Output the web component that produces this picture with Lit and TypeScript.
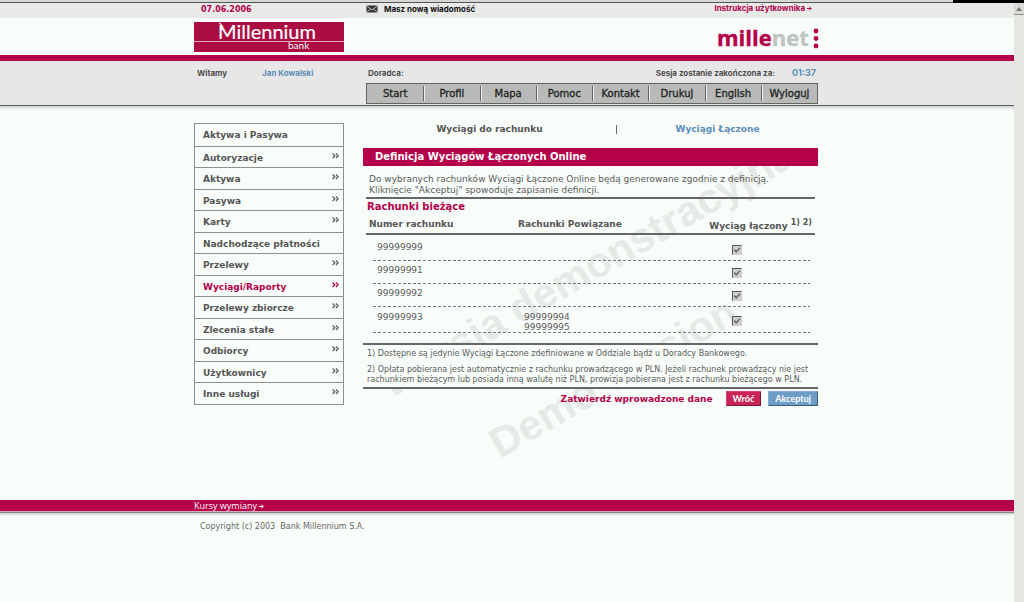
import { LitElement, html, css, svg } from "lit";
import { customElement } from "lit/decorators.js";
import { classMap } from "lit/directives/class-map.js";

interface MenuItem { label: string; more: boolean; active?: boolean }
interface Account { number: string; linked: string[] }

const NAV = ["Start", "Profil", "Mapa", "Pomoc", "Kontakt", "Drukuj", "English", "Wyloguj"];

const MENU: MenuItem[] = [
  { label: "Aktywa i Pasywa", more: false },
  { label: "Autoryzacje", more: true },
  { label: "Aktywa", more: true },
  { label: "Pasywa", more: true },
  { label: "Karty", more: true },
  { label: "Nadchodzące płatności", more: false },
  { label: "Przelewy", more: true },
  { label: "Wyciągi/Raporty", more: true, active: true },
  { label: "Przelewy zbiorcze", more: true },
  { label: "Zlecenia stałe", more: true },
  { label: "Odbiorcy", more: true },
  { label: "Użytkownicy", more: true },
  { label: "Inne usługi", more: true },
];

const ACCOUNTS: Account[] = [
  { number: "99999999", linked: [] },
  { number: "99999991", linked: [] },
  { number: "99999992", linked: [] },
  { number: "99999993", linked: ["99999994", "99999995"] },
];

const arrow = html`<svg class="arrow" viewBox="0 0 5 5" width="5" height="5" aria-hidden="true">
  ${svg`<path d="M0 2.5H4M2.3 .6L4.2 2.5L2.3 4.4" fill="none" stroke="currentColor" stroke-width="1"/>`}
</svg>`;

@customElement("bank-header")
class BankHeader extends LitElement {
  static styles = css`
    :host { display: block; }
    a { color: inherit; text-decoration: none; }
    .wrap { width: 100%; max-width: 626px; margin: 0 auto; display: grid; grid-template-columns: 172px 1fr; }
    .top { background: #e8eae8; height: 15px; font-size: 8px; line-height: 10px; font-weight: bold; }
    .date { color: #b5004a; padding: 2px 0 0 7px; }
    .links, .hello, .info { font-family: Inter, sans-serif; }
    .links { display: flex; justify-content: space-between; padding-right: 8px; color: #111; }
    .mail { display: flex; align-items: center; gap: 6px; }
    .guide { color: #b5004a; }
    .brand { height: 37px; background: #f8fdf9; }
    .brand .wrap { grid-template-columns: 150px 1fr; align-items: center; height: 37px; }
    .bank { background: #ab0c42; display: block; height: 30px; overflow: visible; }
    .millenet { justify-self: end; display: block; overflow: visible; }
    .stripe { height: 6px; background: #b5004a; }
    .session { background: #e8e7e7; border-bottom: 1px solid #5c5c5c; }
    .hello { display: flex; gap: 35px; padding: 6px 0 0 3px; font-weight: bold; font-size: 8px; line-height: 12px; color: #4d4d4d; }
    .user { color: #5b8db8; }
    .right { padding-right: 2px; }
    .info { display: flex; padding: 6px 2px 4px; font-size: 8px; line-height: 12px; font-weight: bold; color: #4d4d4d; }
    .info .timer { margin-left: auto; }
    .clock { color: #5b8db8; font-size: 9px; margin-left: 17px; }
    nav { display: grid; grid-template-columns: repeat(8, 1fr); height: 19px; margin-bottom: 1px; background: #b7bab7; border: 1px solid #626562; }
    nav a { display: flex; align-items: center; justify-content: center; font-size: 10px; line-height: 12px; color: #222; -webkit-text-stroke: 0.3px #222; margin: 2px 0; border-left: 1px solid #666; box-shadow: inset 1px 0 #eceeec; }
    nav a:first-child { border-left: 0; box-shadow: none; }
    .shade { height: 4px; background: linear-gradient(#cfd1cf, #f8fdf9); }
  `;
  render() {
    return html`
      <div class="top"><div class="wrap">
        <span class="date">07.06.2006</span>
        <div class="links">
          <a class="mail" href="#">
            <svg width="12" height="8" viewBox="0 0 12 8" aria-hidden="true">
              <rect x=".5" y=".5" width="11" height="7" fill="#333" />
              <path d="M1 1L6 5L11 1M1 7L4.4 4M11 7L7.6 4" stroke="#e8eae8" fill="none" stroke-width=".8" />
            </svg>
            Masz nową wiadomość</a>
          <a class="guide" href="#">Instrukcja użytkownika ${arrow}</a>
        </div>
      </div></div>
      <div class="brand"><div class="wrap">
        <svg class="bank" width="150" height="30" viewBox="0 0 150 30" role="img" aria-label="Millennium bank">
          <path d="M0 19.5H150" stroke="#e9a9bd" stroke-width="1" />
          <path d="M25 1Q28.500 2 28 8" stroke="#fff" stroke-width="1.2" fill="none" />
          <text x="24" y="17" font-family="Lato, sans-serif" font-size="20" fill="#fff" stroke="#fff" stroke-width=".2">Millennium</text>
          <text x="94" y="27" font-family="Lato, sans-serif" font-size="10" fill="#fff">bank</text>
        </svg>
        <svg class="millenet" width="104" height="30" viewBox="0 0 104 30" role="img" aria-label="millenet">
          <text x="1" y="24" font-family="Open Sans, sans-serif" font-weight="700" font-size="22" fill="#b5004a" stroke="#b5004a" stroke-width=".4">mille<tspan fill="#c0c4c2" stroke="#c0c4c2">net</tspan></text>
          <circle cx="100" cy="9" r="2.400" fill="#b5004a" />
          <circle cx="100" cy="16.500" r="2.400" fill="#b5004a" />
          <circle cx="100" cy="24" r="2.400" fill="#b5004a" />
        </svg>
      </div></div>
      <div class="stripe"></div>
      <div class="session"><div class="wrap">
        <div class="hello"><span>Witamy</span><span class="user">Jan Kowalski</span></div>
        <div class="right">
          <div class="info"><span>Doradca:</span><span class="timer">Sesja zostanie zakończona za:</span><span class="clock">01:37</span></div>
          <nav>${NAV.map((n) => html`<a href="#">${n}</a>`)}</nav>
        </div>
      </div></div>
      <div class="shade"></div>`;
  }
}

@customElement("side-menu")
class SideMenu extends LitElement {
  static styles = css`
    :host { display: block; }
    ul { list-style: none; margin: 0; padding: 0; height: 280px; display: grid; grid-auto-rows: 1fr; border: 1px solid #8d908d; }
    li + li { border-top: 1px solid #8d908d; }
    a { display: flex; justify-content: space-between; padding: 5px 4px 0 8px; font-size: 9px; line-height: 13px; font-weight: bold; color: #555; text-decoration: none; }
    .active { color: #b5004a; }
    svg { display: block; margin-top: 1px; }
  `;
  render() {
    return html`<ul>${MENU.map((m) => html`<li>
      <a href="#" class=${classMap({ active: !!m.active })}><span>${m.label}</span>
      ${m.more ? html`<svg width="7" height="6" viewBox="0 0 7 6" aria-hidden="true"><path d="M.6 .5L2.800 2.700L.6 5M3.900 .5L6.100 2.700L3.900 5" fill="none" stroke="currentColor" stroke-width="1.2" /></svg>` : ""}</a>
    </li>`)}</ul>`;
  }
}

@customElement("statement-form")
class StatementForm extends LitElement {
  static styles = css`
    :host { display: block; position: relative; color: #5a5a5a; }
    a { color: inherit; text-decoration: none; }
    .mark { position: absolute; inset: 0; width: 100%; height: 350px; overflow: visible; pointer-events: none; }
    .content { position: relative; }
    .tabs { display: grid; grid-template-columns: 253px 1px 1fr; text-align: center; font-size: 9px; line-height: 12px; font-weight: bold; color: #555; padding: 0 0 13px; }
    .tabs .on { color: #5b8db8; }
    .sep { background: #666; height: 9px; align-self: center; }
    h1 { margin: 0; background: #b5004a; color: #fff; font-size: 10px; line-height: 18px; padding-left: 12px; }
    .intro { margin: 0 3px; padding: 8px 3px 1px; font-size: 9px; line-height: 11px; border-bottom: 2px solid #666; }
    h2 { margin: 0; padding: 2px 4px; font-size: 10px; line-height: 12px; color: #b5004a; }
    table { width: calc(100% - 6px); margin: 0 3px 10px; border-collapse: collapse; font-size: 9px; line-height: 10px; }
    th { text-align: left; padding: 4px 3px 2px; color: #555; vertical-align: top; border-bottom: 2px solid #666; }
    th:first-child { width: 143px; }
    th:last-child { text-align: right; }
    sup { font-size: 8px; line-height: 8px; }
    td { padding: 4px 11px 9px; height: 10px; vertical-align: top; }
    td:nth-child(2) { padding-left: 9px; }
    td:last-child { padding: 7px 73px 6px 0; }
    tbody tr { background: repeating-linear-gradient(90deg, #777 0 3px, transparent 3px 5px) 7px bottom / calc(100% - 12px) 1px no-repeat; }
    tbody tr:first-child td { padding-top: 7px; }
    tbody tr:first-child td:last-child { padding-top: 10px; }
    tbody tr:last-child td { padding-top: 5px; padding-bottom: 1px; }
    tbody tr:last-child td:last-child { padding-top: 9px; }
    .linked { display: block; }
    input { appearance: none; display: block; width: 10px; height: 10px; margin: 0 0 0 auto; border: 1px solid; border-color: #555 #ccc #ccc #555; background: #cfcfcc url("data:image/svg+xml,%3Csvg xmlns='http://www.w3.org/2000/svg' viewBox='0 0 8 8'%3E%3Cpath d='M1.200 3.600L3.200 5.800L7 1.800' fill='none' stroke='%23666' stroke-width='1.500'/%3E%3C/svg%3E"); }
    .notes { background: #f8fdf9; border: solid #666; border-width: 2px 0; padding: 4px 4px 2px; font-size: 8px; line-height: 10px; }
    .notes p { margin: 0; }
    .notes p + p { margin-top: 6px; }
    .actions { display: flex; align-items: center; justify-content: flex-end; gap: 7px; padding-top: 2px; }
    .ask { color: #b5004a; font-size: 9px; font-weight: bold; margin-right: 6px; }
    button { font: bold 9px/12px Lato, sans-serif; color: #fff; background: #ca2457; border: 1px solid; border-color: #d4436f #7d1236 #7d1236 #d4436f; padding: 0 6px; height: 15px; border-radius: 1px; }
    button.go { background: #6d9cc4; border-color: #83acd0 #3a5d7d #3a5d7d #83acd0; }
  `;
  render() {
    return html`
      <svg class="mark" aria-hidden="true">
        <g font-family="Liberation Sans, sans-serif" font-weight="700" fill="#e6eae7">
          <text font-size="42" transform="translate(27 276) rotate(-30)">Wersja demonstracyjna</text>
          <text font-size="42" transform="translate(137 336) rotate(-30)">Demo version</text>
        </g>
      </svg>
      <div class="content">
        <div class="tabs"><a href="#">Wyciągi do rachunku</a><span class="sep"></span><a class="on" href="#">Wyciągi Łączone</a></div>
        <h1>Definicja Wyciągów Łączonych Online</h1>
        <p class="intro">Do wybranych rachunków Wyciągi Łączone Online będą generowane zgodnie z definicją.<br />Kliknięcie "Akceptuj" spowoduje zapisanie definicji.</p>
        <h2>Rachunki bieżące</h2>
        <table>
          <thead><tr><th>Numer rachunku</th><th>Rachunki Powiązane</th><th>Wyciąg łączony <sup>1) 2)</sup></th></tr></thead>
          <tbody>${ACCOUNTS.map((a) => html`<tr>
            <td>${a.number}</td>
            <td>${a.linked.map((l) => html`<span class="linked">${l}</span>`)}</td>
            <td><input type="checkbox" checked disabled aria-label="Wyciąg łączony ${a.number}" /></td>
          </tr>`)}</tbody>
        </table>
        <div class="notes">
          <p>1) Dostępne są jedynie Wyciągi Łączone zdefiniowane w Oddziale bądź u Doradcy Bankowego.</p>
          <p>2) Opłata pobierana jest automatycznie z rachunku prowadzącego w PLN. Jeżeli rachunek prowadzący nie jest rachunkiem bieżącym lub posiada inną walutę niż PLN, prowizja pobierana jest z rachunku bieżącego w PLN.</p>
        </div>
        <div class="actions"><span class="ask">Zatwierdź wprowadzone dane</span><button type="button">Wróć</button><button type="button" class="go">Akceptuj</button></div>
      </div>`;
  }
}

@customElement("app-root")
class AppRoot extends LitElement {
  static styles = css`
    :host { display: flex; flex-direction: column; min-height: 100vh; background: #f8fdf9; font-family: "DejaVu Sans", Verdana, sans-serif; }
    .edge { display: flex; height: 3px; box-sizing: border-box; background: linear-gradient(#d6d8d5 2px, #555 2px); }
    .edge span { width: 71px; margin-left: auto; background: #000; }
    .window { display: grid; grid-template-columns: 1fr 10px; flex: 1; }
    .scroll { background: #e4e6e0; }
    .up { display: block; width: 10px; height: 12px; border: 0; border-bottom: 1px solid #888; padding: 0; background: #d8dad4; }
    .up svg { display: block; margin: 0 auto; }
    .body { width: 100%; max-width: 626px; box-sizing: border-box; padding: 13px 2px 0 0; margin: 0 auto; display: grid; grid-template-columns: 150px 1fr; gap: 19px; min-height: 390px; align-items: start; }
    .rates { background: #b5004a; color: #fff; font: 9px/11px "Open Sans", sans-serif; }
    .rates a { color: inherit; text-decoration: none; }
    .wrap { width: 100%; max-width: 626px; margin: 0 auto; }
    .line { height: 5px; background: linear-gradient(#d9a9bd 1px, #888 1px 2px, #c9cbc9 2px, #f8fdf9); }
    .copy { font-size: 8px; line-height: 12px; color: #666; padding: 5px 6px; box-sizing: border-box; white-space: pre; }
  `;
  render() {
    return html`
      <div class="edge"><span></span></div>
      <div class="window">
        <div class="page">
          <bank-header></bank-header>
          <main class="body">
            <side-menu></side-menu>
            <statement-form></statement-form>
          </main>
          <footer>
            <div class="rates"><div class="wrap"><a href="#">Kursy wymiany ${arrow}</a></div></div>
            <div class="line"></div>
            <div class="wrap copy">Copyright (c) 2003  Bank Millennium S.A.</div>
          </footer>
        </div>
        <div class="scroll"><button class="up" type="button" aria-label="Przewiń w górę"><svg width="6" height="4" viewBox="0 0 6 4"><path d="M3 0L6 4H0Z" fill="#777" /></svg></button></div>
      </div>`;
  }
}
